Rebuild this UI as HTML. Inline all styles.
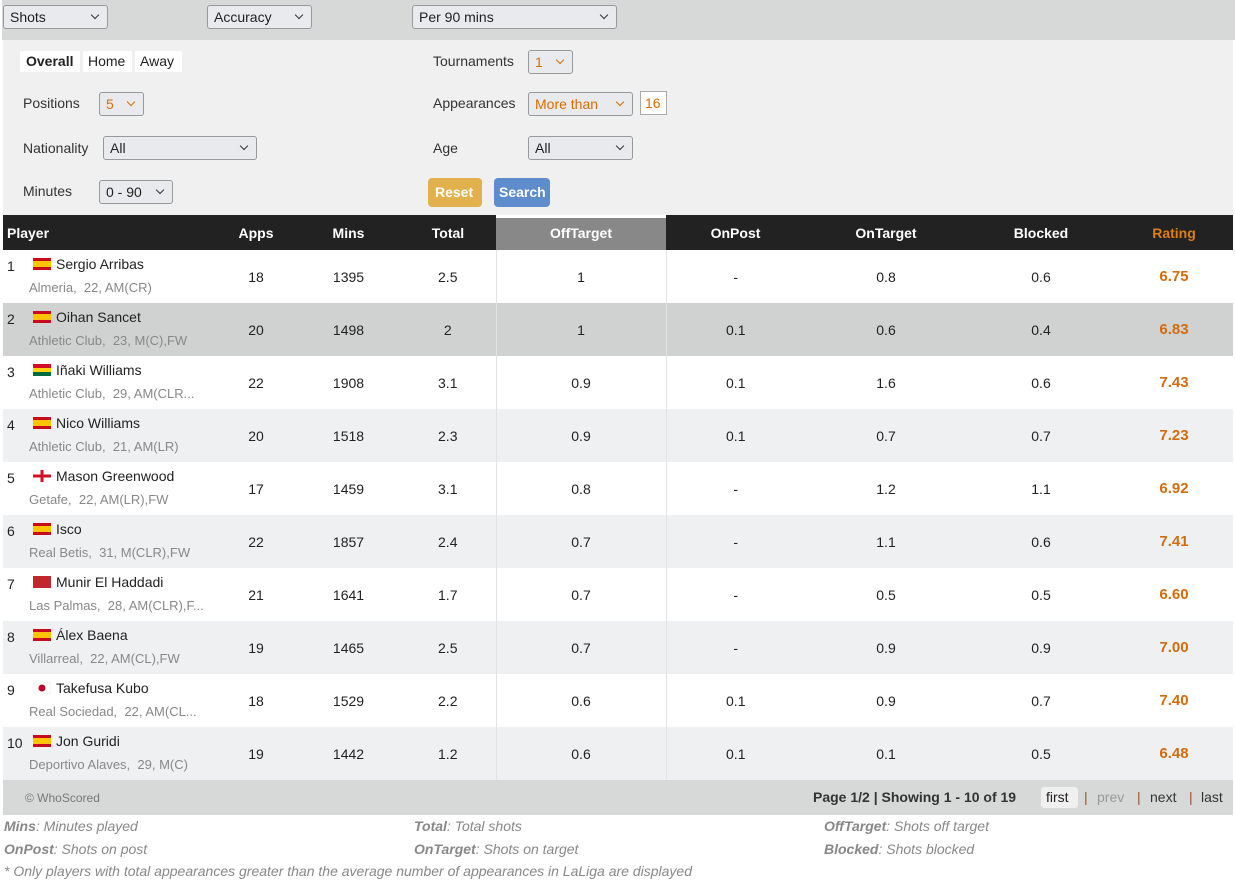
<!DOCTYPE html>
<html><head><meta charset="utf-8"><style>
*{box-sizing:border-box}
body{margin:0;width:1235px;height:881px;overflow:hidden;font-family:"Liberation Sans",sans-serif;font-size:14px;color:#222;background:#fff;position:relative}
.abs{position:absolute}
.sel{position:absolute;height:24px;border:1px solid #999;border-radius:3px;background:#e9eaed;font-size:14px;padding:3px 0 0 6px;color:#222}
.sel:after{content:"";position:absolute;right:9px;top:6px;width:5px;height:5px;border-right:1.5px solid #333;border-bottom:1.5px solid #333;transform:rotate(45deg)}
.or{color:#d96c00}
.or:after{border-color:#d96c00}
.lbl{position:absolute;font-size:14px;color:#333}
table{position:absolute;left:3px;top:215px;width:1230px;border-collapse:collapse;table-layout:fixed}
th{background:#222;color:#fff;height:35px;font-size:14px;font-weight:bold;text-align:center;padding:0}
th.p{text-align:left;padding-left:4px}
td{height:53px;text-align:center;padding:0;font-size:14px}
tr.e td{background:#eff0f1}
tr.h td{background:#d0d1d1}
td.o{border-left:1px solid #e2e3e4;border-right:1px solid #e2e3e4}
td.r{color:#d26c0c;font-weight:bold;font-size:15px}
td.p{text-align:left;position:relative}
.n{position:absolute;left:4px;top:8px}
.f{position:absolute;left:30px;top:8px;width:18px;height:12px}
.nm{position:absolute;left:53px;top:6px}
.cl{position:absolute;left:26px;top:30px;color:#888;font-size:13px;white-space:nowrap}
.lg{position:absolute;font-size:14px;color:#888;font-style:italic}
.lg b{font-weight:bold}
</style></head><body>
<div class="abs" style="left:2px;top:0;width:1233px;height:40px;background:#d7d8d8"></div>
<div class="sel" style="left:3px;top:5px;width:105px">Shots</div>
<div class="sel" style="left:207px;top:5px;width:105px">Accuracy</div>
<div class="sel" style="left:412px;top:5px;width:205px">Per 90 mins</div>
<div class="abs" style="left:3px;top:40px;width:1230px;height:175px;background:#f0f0f0"></div>
<div class="abs" style="left:83px;top:51px;width:49px;height:21px;background:#fff;padding:2px 0 0 5px">Home</div>
<div class="abs" style="left:135px;top:51px;width:47px;height:21px;background:#fff;padding:2px 0 0 5px">Away</div>
<div class="abs" style="left:20px;top:51px;width:60px;height:21px;background:#fff;font-weight:bold;padding:2px 0 0 6px">Overall</div>
<div class="lbl" style="left:23px;top:95px">Positions</div>
<div class="sel or" style="left:99px;top:92px;width:45px">5</div>
<div class="lbl" style="left:23px;top:140px">Nationality</div>
<div class="sel" style="left:103px;top:136px;width:154px">All</div>
<div class="lbl" style="left:23px;top:183px">Minutes</div>
<div class="sel" style="left:99px;top:180px;width:74px">0 - 90</div>
<div class="lbl" style="left:433px;top:53px">Tournaments</div>
<div class="sel or" style="left:528px;top:50px;width:45px">1</div>
<div class="lbl" style="left:433px;top:95px">Appearances</div>
<div class="sel or" style="left:528px;top:92px;width:105px">More than</div>
<div class="abs or" style="left:640px;top:91px;width:27px;height:24px;background:#fff;border:1px solid #aaa;padding:3px 0 0 4px">16</div>
<div class="lbl" style="left:433px;top:140px">Age</div>
<div class="sel" style="left:528px;top:136px;width:105px">All</div>
<div class="abs" style="left:428px;top:178px;width:54px;height:29px;background:#e2b04c;border-radius:4px;color:#fff;font-weight:bold;padding:6px 0 0 7px">Reset</div>
<div class="abs" style="left:494px;top:178px;width:56px;height:29px;background:#5f8ccd;border-radius:4px;color:#fff;font-weight:bold;padding:6px 0 0 5px">Search</div>
<table>
<colgroup><col style="width:212px"><col style="width:82px"><col style="width:103px"><col style="width:96px"><col style="width:170px"><col style="width:139px"><col style="width:162px"><col style="width:148px"><col style="width:118px"></colgroup>
<tr><th class="p">Player</th><th>Apps</th><th>Mins</th><th>Total</th><th style="background:#888;box-shadow:inset 0 3px 0 #fff">OffTarget</th><th>OnPost</th><th>OnTarget</th><th>Blocked</th><th style="color:#e07d12">Rating</th></tr>
<tr><td class="p"><span class="n">1</span><svg class="f" viewBox="0 0 18 12"><rect width="18" height="12" fill="#c60b1e"/><rect y="3" width="18" height="6" fill="#ffc400"/></svg><span class="nm">Sergio Arribas</span><span class="cl">Almeria,&nbsp; 22, AM(CR)</span></td><td>18</td><td>1395</td><td>2.5</td><td class="o">1</td><td>-</td><td>0.8</td><td>0.6</td><td class="r">6.75</td></tr>
<tr class="h"><td class="p"><span class="n">2</span><svg class="f" viewBox="0 0 18 12"><rect width="18" height="12" fill="#c60b1e"/><rect y="3" width="18" height="6" fill="#ffc400"/></svg><span class="nm">Oihan Sancet</span><span class="cl">Athletic Club,&nbsp; 23, M(C),FW</span></td><td>20</td><td>1498</td><td>2</td><td class="o">1</td><td>0.1</td><td>0.6</td><td>0.4</td><td class="r">6.83</td></tr>
<tr><td class="p"><span class="n">3</span><svg class="f" viewBox="0 0 18 12"><rect width="18" height="4" fill="#ce1126"/><rect y="4" width="18" height="4" fill="#fcd116"/><rect y="8" width="18" height="4" fill="#006b3f"/></svg><span class="nm">Iñaki Williams</span><span class="cl">Athletic Club,&nbsp; 29, AM(CLR...</span></td><td>22</td><td>1908</td><td>3.1</td><td class="o">0.9</td><td>0.1</td><td>1.6</td><td>0.6</td><td class="r">7.43</td></tr>
<tr class="e"><td class="p"><span class="n">4</span><svg class="f" viewBox="0 0 18 12"><rect width="18" height="12" fill="#c60b1e"/><rect y="3" width="18" height="6" fill="#ffc400"/></svg><span class="nm">Nico Williams</span><span class="cl">Athletic Club,&nbsp; 21, AM(LR)</span></td><td>20</td><td>1518</td><td>2.3</td><td class="o">0.9</td><td>0.1</td><td>0.7</td><td>0.7</td><td class="r">7.23</td></tr>
<tr><td class="p"><span class="n">5</span><svg class="f" viewBox="0 0 18 12"><rect width="18" height="12" fill="#fff"/><rect x="7.5" width="3" height="12" fill="#ce1124"/><rect y="4.5" width="18" height="3" fill="#ce1124"/></svg><span class="nm">Mason Greenwood</span><span class="cl">Getafe,&nbsp; 22, AM(LR),FW</span></td><td>17</td><td>1459</td><td>3.1</td><td class="o">0.8</td><td>-</td><td>1.2</td><td>1.1</td><td class="r">6.92</td></tr>
<tr class="e"><td class="p"><span class="n">6</span><svg class="f" viewBox="0 0 18 12"><rect width="18" height="12" fill="#c60b1e"/><rect y="3" width="18" height="6" fill="#ffc400"/></svg><span class="nm">Isco</span><span class="cl">Real Betis,&nbsp; 31, M(CLR),FW</span></td><td>22</td><td>1857</td><td>2.4</td><td class="o">0.7</td><td>-</td><td>1.1</td><td>0.6</td><td class="r">7.41</td></tr>
<tr><td class="p"><span class="n">7</span><svg class="f" viewBox="0 0 18 12"><rect width="18" height="12" fill="#c1272d"/></svg><span class="nm">Munir El Haddadi</span><span class="cl">Las Palmas,&nbsp; 28, AM(CLR),F...</span></td><td>21</td><td>1641</td><td>1.7</td><td class="o">0.7</td><td>-</td><td>0.5</td><td>0.5</td><td class="r">6.60</td></tr>
<tr class="e"><td class="p"><span class="n">8</span><svg class="f" viewBox="0 0 18 12"><rect width="18" height="12" fill="#c60b1e"/><rect y="3" width="18" height="6" fill="#ffc400"/></svg><span class="nm">Álex Baena</span><span class="cl">Villarreal,&nbsp; 22, AM(CL),FW</span></td><td>19</td><td>1465</td><td>2.5</td><td class="o">0.7</td><td>-</td><td>0.9</td><td>0.9</td><td class="r">7.00</td></tr>
<tr><td class="p"><span class="n">9</span><svg class="f" viewBox="0 0 18 12"><rect width="18" height="12" fill="#fff" stroke="#ddd" stroke-width=".5"/><circle cx="9" cy="6" r="3.5" fill="#bc002d"/></svg><span class="nm">Takefusa Kubo</span><span class="cl">Real Sociedad,&nbsp; 22, AM(CL...</span></td><td>18</td><td>1529</td><td>2.2</td><td class="o">0.6</td><td>0.1</td><td>0.9</td><td>0.7</td><td class="r">7.40</td></tr>
<tr class="e"><td class="p"><span class="n">10</span><svg class="f" viewBox="0 0 18 12"><rect width="18" height="12" fill="#c60b1e"/><rect y="3" width="18" height="6" fill="#ffc400"/></svg><span class="nm">Jon Guridi</span><span class="cl">Deportivo Alaves,&nbsp; 29, M(C)</span></td><td>19</td><td>1442</td><td>1.2</td><td class="o">0.6</td><td>0.1</td><td>0.1</td><td>0.5</td><td class="r">6.48</td></tr>
</table>
<div class="abs" style="left:3px;top:780px;width:1230px;height:35px;background:#d7d8d8"></div>
<div class="abs" style="left:25px;top:791px;font-size:12px;color:#777">© WhoScored</div>
<div class="abs" style="left:813px;top:789px;font-weight:bold;font-size:14px;color:#333">Page 1/2 | Showing 1 - 10 of 19</div>
<div class="abs" style="left:1041px;top:787px;width:37px;height:21px;background:#f0f0f0;border-radius:3px;padding:2px 0 0 5px">first</div>
<div class="abs" style="left:1084px;top:789px;color:#a0522d">|</div>
<div class="abs" style="left:1097px;top:789px;color:#999">prev</div>
<div class="abs" style="left:1137px;top:789px;color:#a0522d">|</div>
<div class="abs" style="left:1150px;top:789px;color:#333">next</div>
<div class="abs" style="left:1189px;top:789px;color:#a0522d">|</div>
<div class="abs" style="left:1201px;top:789px;color:#333">last</div>
<div class="lg" style="left:4px;top:818px"><b>Mins</b>: Minutes played</div>
<div class="lg" style="left:414px;top:818px"><b>Total</b>: Total shots</div>
<div class="lg" style="left:824px;top:818px"><b>OffTarget</b>: Shots off target</div>
<div class="lg" style="left:4px;top:841px"><b>OnPost</b>: Shots on post</div>
<div class="lg" style="left:414px;top:841px"><b>OnTarget</b>: Shots on target</div>
<div class="lg" style="left:824px;top:841px"><b>Blocked</b>: Shots blocked</div>
<div class="lg" style="left:4px;top:863px">* Only players with total appearances greater than the average number of appearances in LaLiga are displayed</div>
</body></html>
